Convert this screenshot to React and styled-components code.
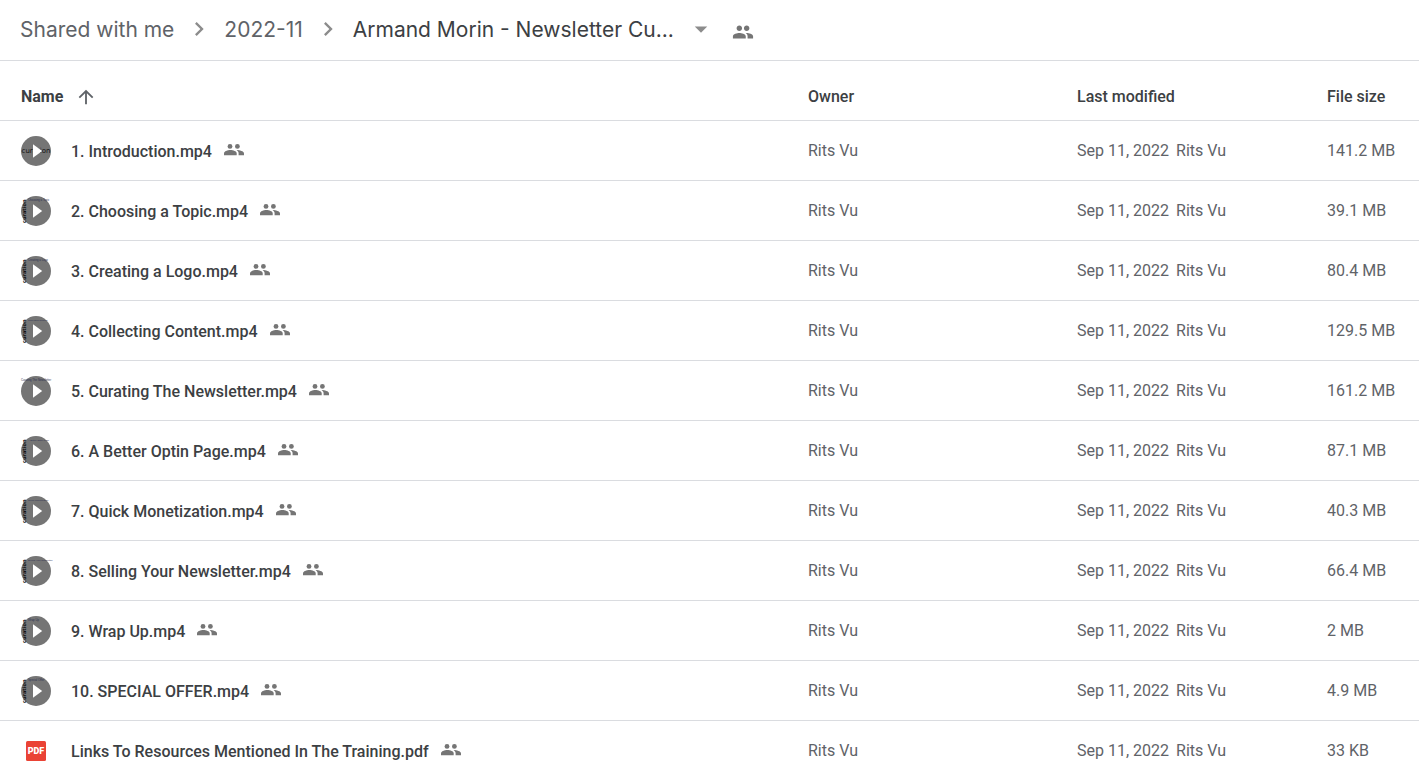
import React from "react";
import styled, { createGlobalStyle } from "styled-components";
import {
  MdPeople,
  MdArrowUpward,
  MdArrowDropDown,
  MdChevronRight,
} from "react-icons/md";

const files = [
  { name: "1. Introduction.mp4", size: "141.2 MB", thumb: "cover" },
  { name: "2. Choosing a Topic.mp4", size: "39.1 MB", thumb: "slide", caption: "Choosing a Topic" },
  { name: "3. Creating a Logo.mp4", size: "80.4 MB", thumb: "slide", caption: "Creating a Logo" },
  { name: "4. Collecting Content.mp4", size: "129.5 MB", thumb: "slide", caption: "Collecting Content" },
  { name: "5. Curating The Newsletter.mp4", size: "161.2 MB", thumb: "caption", caption: "Curating The Newsletter" },
  { name: "6. A Better Optin Page.mp4", size: "87.1 MB", thumb: "slide", caption: "A Better Optin Page" },
  { name: "7. Quick Monetization.mp4", size: "40.3 MB", thumb: "slide", caption: "Quick Monetization" },
  { name: "8. Selling Your Newsletter.mp4", size: "66.4 MB", thumb: "slide", caption: "Selling Your Newsletter" },
  { name: "9. Wrap Up.mp4", size: "2 MB", thumb: "slide", caption: "Wrap Up" },
  { name: "10. SPECIAL OFFER.mp4", size: "4.9 MB", thumb: "slide", caption: "Special Offer" },
  { name: "Links To Resources Mentioned In The Training.pdf", size: "33 KB", thumb: "pdf" },
];

function VideoThumb({ kind, caption }) {
  return (
    <ThumbSvg width="30" height="30" viewBox="0 0 30 30" aria-hidden="true">
      <circle cx="15" cy="15" r="15" fill="#757575" />
      {kind === "cover" && (
        <ThumbText x="15" y="17" fontSize="7" textAnchor="middle">
          curation
        </ThumbText>
      )}
      {kind === "slide" && (
        <ThumbText transform="translate(5 27) rotate(-90)" fontSize="5" $bold>
          curation
        </ThumbText>
      )}
      {caption && (
        <ThumbText
          x={kind === "slide" ? 7 : 0}
          y="5"
          fontSize={kind === "slide" && caption.length > 16 ? 2.4 : 2.8}
          $soft
        >
          {caption}
        </ThumbText>
      )}
      <path d="M12 8.3v13.4l9.2-6.7z" fill="#fff" />
    </ThumbSvg>
  );
}

function PdfIcon() {
  return (
    <svg width="30" height="30" viewBox="0 0 30 30" aria-hidden="true">
      <rect x="5" y="5" width="20" height="20" rx="1.5" fill="#ea4335" />
      <PdfText x="15" y="18" textAnchor="middle">
        PDF
      </PdfText>
    </svg>
  );
}

function SharedIcon() {
  return (
    <svg width="20" height="16" viewBox="0 0 20 16" role="img" aria-label="Shared">
      <g fill="#757575">
        <circle cx="6" cy="4.4" r="2.4" />
        <circle cx="13.4" cy="4.4" r="2.4" />
        <path d="M0 13.200V11.500C0 9.300 3.600 8.100 6.400 8.100s6.300 1.200 6.300 3.400v1.700z" />
        <path d="M12.600 8.100c3 0 7.400 1.200 7.400 3.400v1.700h-5.400v-1.700c0-1.500-.8-2.600-2-3.400z" />
      </g>
    </svg>
  );
}

export default function App() {
  return (
    <Page>
      <GlobalStyle />
      <Breadcrumbs aria-label="Folder path">
        <Crumb href="#shared">Shared with me</Crumb>
        <Separator aria-hidden="true" />
        <Crumb href="#2022-11">2022-11</Crumb>
        <Separator aria-hidden="true" />
        <FolderButton type="button">
          Armand Morin - Newsletter Cu...
          <MdArrowDropDown size={30} color="#8c8c8c" aria-hidden="true" />
        </FolderButton>
        <ShareButton type="button" aria-label="Manage people">
          <MdPeople size={22} />
        </ShareButton>
      </Breadcrumbs>
      <FileTable>
        <thead>
          <tr>
            <HeadCell $first>
              <SortButton type="button">
                Name
                <MdArrowUpward size={22} color="#5f6368" aria-hidden="true" />
              </SortButton>
            </HeadCell>
            <HeadCell $width={269}>Owner</HeadCell>
            <HeadCell $width={250}>Last modified</HeadCell>
            <HeadCell $width={92}>File size</HeadCell>
          </tr>
        </thead>
        <tbody>
          {files.map((file) => (
            <tr key={file.name}>
              <Cell $first>
                <FileName>
                  {file.thumb === "pdf" ? (
                    <PdfIcon />
                  ) : (
                    <VideoThumb kind={file.thumb} caption={file.caption} />
                  )}
                  <FileLabel>
                    <span>{file.name}</span>
                    <SharedIcon />
                  </FileLabel>
                </FileName>
              </Cell>
              <Cell>Rits Vu</Cell>
              <Cell>
                <Modified>
                  Sep 11, 2022
                  <span>Rits Vu</span>
                </Modified>
              </Cell>
              <Cell>{file.size}</Cell>
            </tr>
          ))}
        </tbody>
      </FileTable>
    </Page>
  );
}

const GlobalStyle = createGlobalStyle`
  * {
    box-sizing: border-box;
  }

  body {
    margin: 0;
    background: #fff;
    color: #3c4043;
    font-family: Roboto, "Liberation Sans", sans-serif;
    font-size: 16px;
  }

  button {
    padding: 0;
    border: 0;
    background: none;
    color: inherit;
    font: inherit;
    cursor: pointer;
  }
`;

const Page = styled.main`
  height: 100vh;
  overflow: hidden;
`;

const Breadcrumbs = styled.nav`
  display: flex;
  align-items: center;
  height: 61px;
  padding: 0 0 2px 20px;
  border-bottom: 1px solid #dadce0;
  font-family: Inter, Roboto, sans-serif;
  font-size: 21px;
  white-space: nowrap;
`;

const Crumb = styled.a`
  color: #5f6368;
  text-decoration: none;
`;

const Separator = styled(MdChevronRight)`
  width: 28px;
  height: 28px;
  margin: 0 11px;
  color: #8c8c8c;
`;

const FolderButton = styled.button`
  display: flex;
  align-items: center;
  gap: 12px;
`;

const ShareButton = styled.button`
  display: flex;
  margin: 6px 0 0 16px;

  && {
    color: #757575;
  }
`;

const FileTable = styled.table`
  width: 100%;
  table-layout: fixed;
  border-collapse: separate;
  border-spacing: 0;
`;

const HeadCell = styled.th`
  width: ${({ $width }) => ($width ? `${$width}px` : "auto")};
  height: 60px;
  padding: ${({ $first }) => ($first ? "12px 0 0 21px" : "12px 0 0")};
  border-bottom: 1px solid #dadce0;
  font-weight: ${({ $first }) => ($first ? 700 : 500)};
  text-align: left;
`;

const SortButton = styled.button`
  display: flex;
  align-items: center;
  gap: 12px;
`;

const Cell = styled.td`
  height: 60px;
  padding: ${({ $first }) => ($first ? "0 0 0 21px" : "0")};
  border-bottom: 1px solid #dadce0;
  color: #5f6368;
  white-space: nowrap;
`;

const FileName = styled.div`
  display: flex;
  align-items: center;
  gap: 20px;
`;

const FileLabel = styled.span`
  display: flex;
  align-items: flex-start;
  gap: 12px;
  padding-top: 2px;
  color: #3c4043;
  font-weight: 500;
`;

const Modified = styled.span`
  display: flex;
  gap: 7px;
`;

const ThumbSvg = styled.svg`
  overflow: visible;
`;

const ThumbText = styled.text`
  fill: ${({ $soft }) => ($soft ? "#2c3050" : "#111")};
  font-family: ${({ $soft }) =>
    $soft ? '"Liberation Sans", sans-serif' : '"DejaVu Sans", sans-serif'};
  font-weight: ${({ $bold }) => ($bold ? 700 : 400)};
`;

const PdfText = styled.text`
  fill: #fff;
  font-family: Roboto, sans-serif;
  font-size: 9px;
  font-weight: 900;
`;
